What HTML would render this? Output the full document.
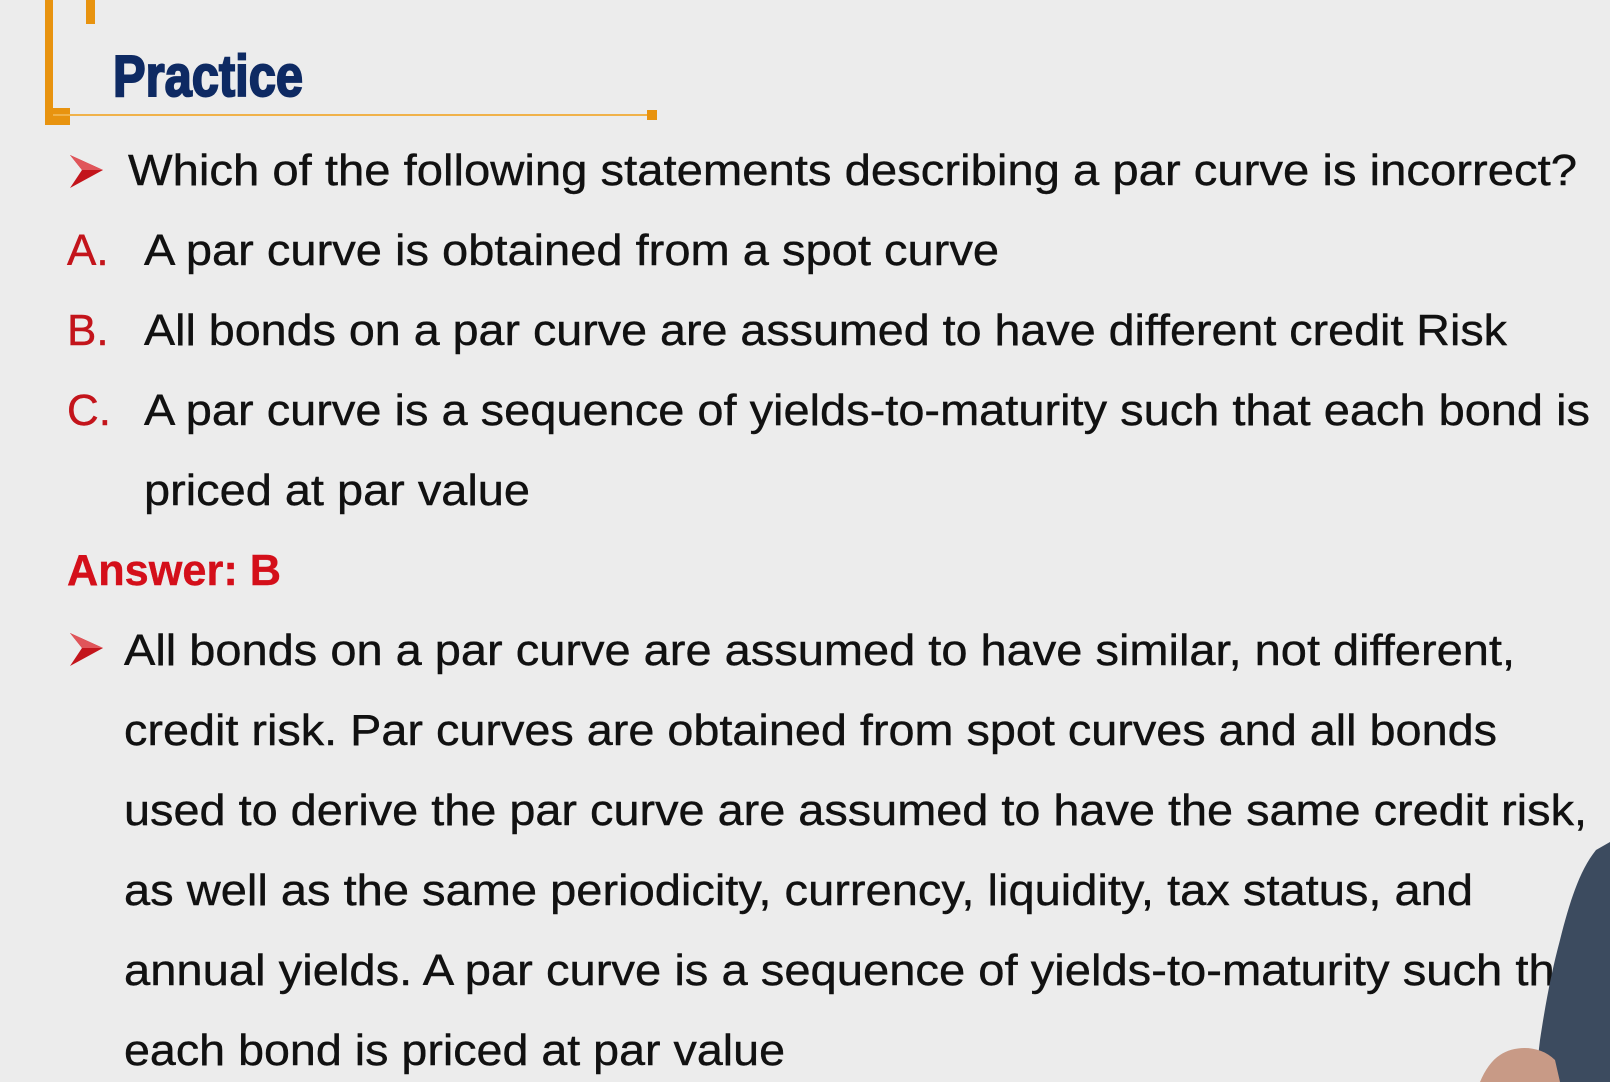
<!DOCTYPE html>
<html><head><meta charset="utf-8"><style>
html,body{margin:0;padding:0;background:#ececec;}
body{width:1610px;height:1082px;overflow:hidden;position:relative;}
svg{position:absolute;left:0;top:0;}
</style></head><body>
<svg width="1610" height="1082" viewBox="0 0 1610 1082" xmlns="http://www.w3.org/2000/svg">
<rect width="1610" height="1082" fill="#ececec"/>
<rect x="45" y="0" width="8" height="125" fill="#e8930f"/>
<rect x="45" y="108" width="25" height="17" fill="#e8930f"/>
<rect x="86" y="0" width="9" height="24" fill="#e8930f"/>
<rect x="53" y="114" width="600" height="2" fill="#f0b24a"/>
<rect x="647" y="110" width="10" height="10" fill="#e8930f"/>
<text x="113" y="96" font-family="Liberation Sans Narrow, Liberation Sans, sans-serif" font-weight="bold" font-size="58" fill="#0e2a63" stroke="#0e2a63" stroke-width="2" textLength="190" lengthAdjust="spacingAndGlyphs">Practice</text>
<g transform="translate(0,3)"><path d="M70 152 L103 167 L70 185 L82 167 Z" fill="#c3141b"/><path d="M70 152 L103 167 L82 167 Z" fill="#e0555a"/></g>
<g transform="translate(0,481)"><path d="M70 152 L103 167 L70 185 L82 167 Z" fill="#c3141b"/><path d="M70 152 L103 167 L82 167 Z" fill="#e0555a"/></g>
<g font-family="Liberation Sans, sans-serif" font-size="44" fill="#111" stroke="#111" stroke-width="0.4">
<text x="128" y="185" textLength="1449" lengthAdjust="spacingAndGlyphs">Which of the following statements describing a par curve is incorrect?</text>
<text x="67" y="265" fill="#c3141b" stroke="#c3141b">A.</text>
<text x="144" y="265" textLength="855" lengthAdjust="spacingAndGlyphs">A par curve is obtained from a spot curve</text>
<text x="67" y="345" fill="#c3141b" stroke="#c3141b">B.</text>
<text x="144" y="345" textLength="1363" lengthAdjust="spacingAndGlyphs">All bonds on a par curve are assumed to have different credit Risk</text>
<text x="67" y="425" fill="#c3141b" stroke="#c3141b">C.</text>
<text x="144" y="425" textLength="1446" lengthAdjust="spacingAndGlyphs">A par curve is a sequence of yields-to-maturity such that each bond is</text>
<text x="144" y="505" textLength="386" lengthAdjust="spacingAndGlyphs">priced at par value</text>
<text x="67" y="585" fill="#d40f1a" stroke="#d40f1a" font-weight="bold" textLength="214" lengthAdjust="spacingAndGlyphs">Answer: B</text>
<text x="124" y="665" textLength="1391" lengthAdjust="spacingAndGlyphs">All bonds on a par curve are assumed to have similar, not different,</text>
<text x="124" y="745" textLength="1373" lengthAdjust="spacingAndGlyphs">credit risk. Par curves are obtained from spot curves and all bonds</text>
<text x="124" y="825" textLength="1463" lengthAdjust="spacingAndGlyphs">used to derive the par curve are assumed to have the same credit risk,</text>
<text x="124" y="905" textLength="1349" lengthAdjust="spacingAndGlyphs">as well as the same periodicity, currency, liquidity, tax status, and</text>
<text x="124" y="985" textLength="1470" lengthAdjust="spacingAndGlyphs">annual yields. A par curve is a sequence of yields-to-maturity such that</text>
<text x="124" y="1065" textLength="661" lengthAdjust="spacingAndGlyphs">each bond is priced at par value</text>
</g>
<path d="M1610 842 L1596 850 C1580 870 1570 900 1560 940 C1552 970 1546 1000 1540 1040 L1535 1082 L1610 1082 Z" fill="#3c4b5f"/>
<path d="M1500 1055 C1515 1045 1540 1045 1555 1060 L1560 1082 L1480 1082 C1485 1070 1492 1060 1500 1055 Z" fill="#c89a86"/>
</svg>
</body></html>
